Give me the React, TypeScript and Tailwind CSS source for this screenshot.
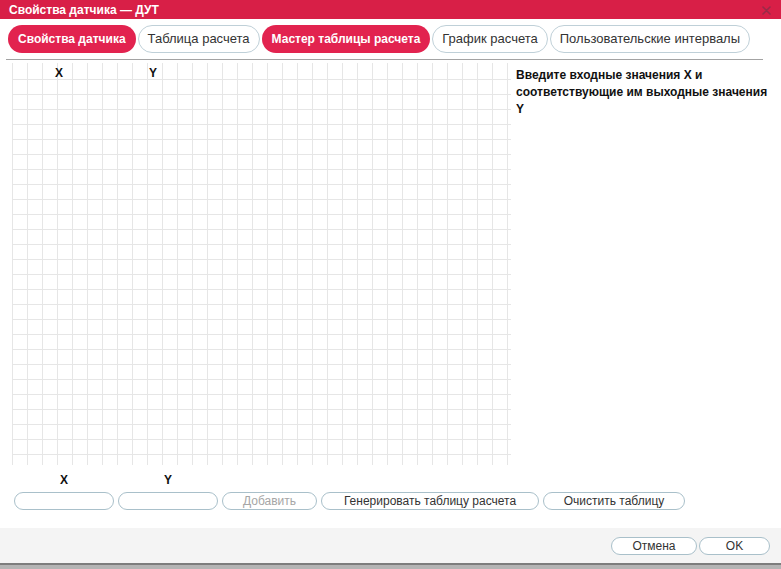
import React from "react";

const tabs = [
  { label: "Свойства датчика", active: true },
  { label: "Таблица расчета", active: false },
  { label: "Мастер таблицы расчета", active: true },
  { label: "График расчета", active: false },
  { label: "Пользовательские интервалы", active: false },
];

export default function App() {
  return (
    <div className="w-[781px] h-[569px] overflow-hidden bg-[#a9a9a9] font-['Liberation_Sans',Arial,sans-serif] text-[#222]">
      <div className="h-[563px] bg-white flex flex-col">
        {/* Title bar */}
        <div className="h-[19px] bg-[#d81f47] flex items-center justify-between pl-[9px] pr-[10px]">
          <span className="text-white font-bold text-[12px] leading-none">Свойства датчика — ДУТ</span>
          <svg width="9" height="9" viewBox="0 0 9 9" className="mt-[1px]">
            <path d="M1 1 L8 8 M8 1 L1 8" stroke="#9a2a48" strokeWidth="1.6" strokeLinecap="round" />
          </svg>
        </div>

        {/* Tabs */}
        <div className="mt-[6px] px-[8px] flex gap-[2px]">
          {tabs.map((t) =>
            t.active ? (
              <div
                key={t.label}
                className="shrink-0 whitespace-nowrap h-[28px] px-[10px] rounded-full bg-[#e2234f] text-white font-bold text-[12px] flex items-center"
              >
                {t.label}
              </div>
            ) : (
              <div
                key={t.label}
                className="shrink-0 whitespace-nowrap h-[28px] px-[9px] rounded-full bg-white border border-[#bfd0d8] text-[#333] text-[13px] flex items-center"
              >
                {t.label}
              </div>
            )
          )}
        </div>

        {/* Separator */}
        <div className="mt-[6px] ml-[6px] w-[757px] h-px bg-[#a3a3a3]" />

        {/* Main */}
        <div className="flex h-[405px]">
          <div className="ml-[12px] w-[499px] mt-[3px] h-[402px] bg-[linear-gradient(to_right,#e6e6e6_1px,transparent_1px)] bg-[size:15px_100%]">
            <div className="mt-[2px] h-[390px] bg-[linear-gradient(to_top,#e6e6e6_1px,transparent_1px)] bg-[size:100%_15px]">
              <div className="flex h-[14px] items-end">
                <div className="w-[94px] text-center text-[12px] font-bold leading-none text-[#111]">X</div>
                <div className="w-[94px] text-center text-[12px] font-bold leading-none text-[#111]">Y</div>
              </div>
            </div>
          </div>
          <div className="ml-[5px] pt-[7px] w-[258px] text-[12px] font-bold leading-[17px] text-[#111]">
            Введите входные значения X и соответствующие им выходные значения Y
          </div>
        </div>

        {/* Bottom inputs */}
        <div className="ml-[14px] mt-[8px] flex gap-[4px] text-[12px] font-bold leading-[14px] text-[#111]">
          <div className="w-[100px] text-center">X</div>
          <div className="w-[100px] text-center">Y</div>
        </div>
        <div className="ml-[14px] mt-[5px] flex gap-[4px] text-[12px]">
          <div className="w-[100px] h-[18px] rounded-full border border-[#a9c0ca] bg-white" />
          <div className="w-[100px] h-[18px] rounded-full border border-[#a9c0ca] bg-white" />
          <div className="w-[95px] h-[18px] rounded-full border border-[#a9c0ca] bg-white flex items-center justify-center text-[#a6a6a6]">
            Добавить
          </div>
          <div className="w-[218px] h-[18px] rounded-full border border-[#a9c0ca] bg-white flex items-center justify-center text-[#333]">
            Генерировать таблицу расчета
          </div>
          <div className="w-[142px] h-[18px] rounded-full border border-[#a9c0ca] bg-white flex items-center justify-center text-[#333]">
            Очистить таблицу
          </div>
        </div>

        {/* Footer */}
        <div className="mt-auto h-[35px] bg-[#f4f4f4] flex items-center justify-end gap-[2px] pr-[11px]">
          <div className="w-[86px] h-[18px] rounded-full border border-[#a9c0ca] bg-white flex items-center justify-center text-[12px] text-[#333]">
            Отмена
          </div>
          <div className="w-[71px] h-[18px] rounded-full border border-[#a9c0ca] bg-white flex items-center justify-center text-[12px] text-[#333]">
            OK
          </div>
        </div>
      </div>
      <div className="h-[2px] bg-[#7d7d7d]" />
      <div className="h-[4px] bg-[#b4b4b4]" />
    </div>
  );
}
